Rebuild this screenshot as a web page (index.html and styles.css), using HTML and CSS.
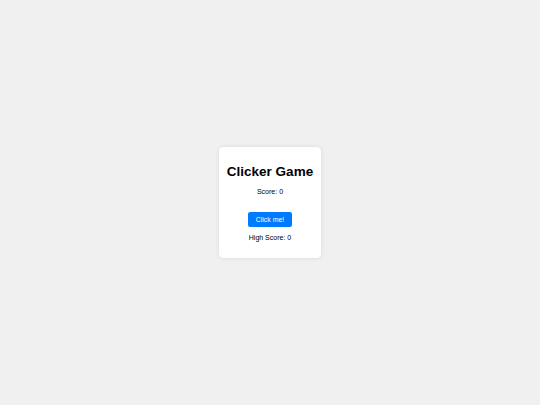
FILE: index.html
```html
<!DOCTYPE html>
<html>
<head>
<meta charset="utf-8">
<link rel="stylesheet" href="styles.css">
</head>
<body>
<div class="card">
  <h1 class="title">Clicker Game</h1>
  <p class="score">Score: 0</p>
  <button class="btn">Click me!</button>
  <p class="high">High Score: 0</p>
</div>
</body>
</html>
```
FILE: styles.css
```css
html, body {
  margin: 0;
  padding: 0;
}
body {
  background: #f0f0f0;
  font-family: "Liberation Sans", Arial, sans-serif;
  min-height: 405px;
  display: flex;
  align-items: center;
  justify-content: center;
}
.card {
  background: #fff;
  padding: 9.2px 7.6px 10.2px;
  border-radius: 4.2px;
  box-shadow: 0 0 4px rgba(0, 0, 0, 0.1);
  text-align: center;
}
.title {
  font-size: 13.5px;
  font-weight: bold;
  margin: 8px 0 9px;
  color: #000;
}
.score, .high {
  font-size: 7px;
  margin: 6.75px 0;
  color: #000;
}
.btn {
  display: block;
  margin: 16.5px auto 0;
  font-family: "Liberation Sans", Arial, sans-serif;
  font-size: 6.9px;
  padding: 4.1px 8.3px;
  background: #007bff;
  color: #fff;
  border: none;
  border-radius: 2.1px;
  line-height: normal;
}
.high {
  margin-top: 6.8px;
}
```
